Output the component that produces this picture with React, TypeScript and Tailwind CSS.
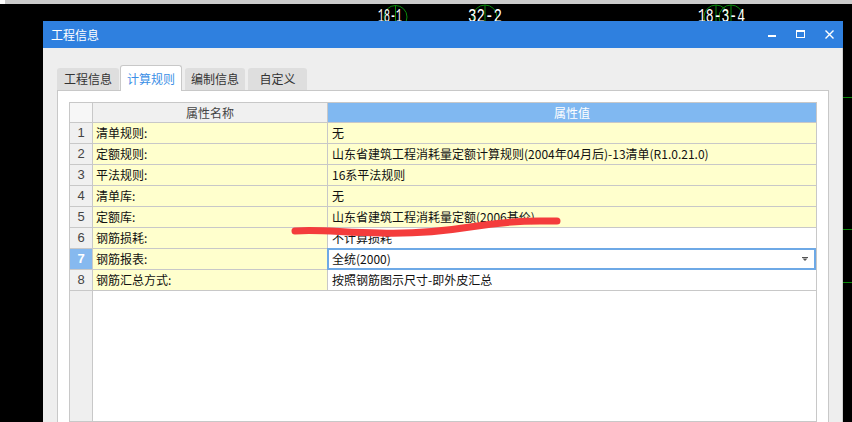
import React from "react";

const rows = [
  { no: 1, name: "清单规则:", value: "无", yellow: true },
  { no: 2, name: "定额规则:", value: "山东省建筑工程消耗量定额计算规则(2004年04月后)-13清单(R1.0.21.0)", yellow: true },
  { no: 3, name: "平法规则:", value: "16系平法规则", yellow: true },
  { no: 4, name: "清单库:", value: "无", yellow: true },
  { no: 5, name: "定额库:", value: "山东省建筑工程消耗量定额(2006基价)", yellow: true },
  { no: 6, name: "钢筋损耗:", value: "不计算损耗", yellow: false },
  { no: 7, name: "钢筋报表:", value: "全统(2000)", yellow: false, selected: true },
  { no: 8, name: "钢筋汇总方式:", value: "按照钢筋图示尺寸-即外皮汇总", yellow: false },
];

const tabs = [
  { label: "工程信息", cls: "w-[62px] h-[22px]" },
  { label: "计算规则", cls: "ml-px w-[62px] h-[26px]", active: true },
  { label: "编制信息", cls: "ml-[3px] w-[60px] h-[22px]" },
  { label: "自定义", cls: "ml-[3px] w-[59px] h-[22px]" },
];

function CanvasBackdrop() {
  // CAD drawing behind the dialog: axis labels and grid lines
  return (
    <svg className="absolute left-0 top-0" width={852} height={422}>
      <g stroke="#0a8a0a" strokeWidth={1} fill="none">
        <circle cx={395.5} cy={17} r={11.5} />
        <line x1={395.5} y1={5} x2={395.5} y2={22} />
        <circle cx={485} cy={17} r={12} />
        <line x1={485} y1={5} x2={485} y2={22} />
        <circle cx={716} cy={17} r={12} />
        <circle cx={731} cy={17} r={12} />
        <line x1={716} y1={5} x2={716} y2={22} />
        <line x1={731} y1={5} x2={731} y2={22} />
        <line x1={843} y1={97.5} x2={852} y2={97.5} />
        <line x1={843} y1={229.5} x2={852} y2={229.5} />
        <line x1={843} y1={282.5} x2={852} y2={282.5} />
      </g>
      <g fill="#ffffff" fontFamily="'Liberation Mono', monospace" fontSize={20}>
        <text x={378} y={22} textLength={24} lengthAdjust="spacingAndGlyphs">18-1</text>
        <text x={468} y={22} textLength={34} lengthAdjust="spacingAndGlyphs">32-2</text>
        <text x={698} y={22} textLength={47} lengthAdjust="spacingAndGlyphs">18-3-4</text>
      </g>
    </svg>
  );
}

function WindowButtons() {
  return (
    <div className="flex items-center h-full">
      <svg width={9} height={9} className="mr-[19px]" viewBox="0 0 9 9">
        <rect x={0} y={5} width={8} height={2} fill="#fff" />
      </svg>
      <svg width={9} height={9} className="mr-[20px]" viewBox="0 0 9 9">
        <rect x={0.5} y={0.5} width={8} height={7} fill="none" stroke="#fff" />
        <rect x={0} y={0} width={9} height={2} fill="#fff" />
      </svg>
      <svg width={9} height={9} className="mr-[9px]" viewBox="0 0 9 9">
        <path d="M0.5 0.5 L8.5 8.5 M8.5 0.5 L0.5 8.5" stroke="#fff" strokeWidth={1.4} />
      </svg>
    </div>
  );
}

function PropertyGrid() {
  return (
    <div className="flex-1 w-[748px] border border-[#c8c8c8] flex flex-col bg-white">
      <div className="flex h-[20px] border-b border-[#c8c8c8]">
        <div className="w-[23px] bg-[#f7f7f7] border-r border-[#c8c8c8]" />
        <div className="w-[235px] bg-[#f0f0f0] border-r border-[#c8c8c8] flex items-center justify-center text-[#444]">
          属性名称
        </div>
        <div className="flex-1 bg-[#80b8f1] flex items-center justify-center text-white">属性值</div>
      </div>
      {rows.map((r) => (
        <div key={r.no} className="flex h-[21px] border-b border-[#c8c8c8]">
          <div
            className={
              r.selected
                ? "w-[23px] border-r border-[#c8c8c8] bg-[#86b9ef] text-white font-bold flex items-center justify-center font-['Liberation_Sans',sans-serif] text-[13px]"
                : "w-[23px] border-r border-[#c8c8c8] bg-[#f0f0f0] text-[#444] flex items-center justify-center font-['Liberation_Sans',sans-serif] text-[13px]"
            }
          >
            {r.no}
          </div>
          <div className="w-[235px] border-r border-[#c8c8c8] bg-[#ffffcd] flex items-center pl-[3px] text-[#111]">
            {r.name}
          </div>
          <div
            className={
              r.yellow
                ? "flex-1 bg-[#ffffcd] flex items-center pl-[4px] text-[#111]"
                : "relative flex-1 bg-white flex items-center pl-[4px] text-[#111]"
            }
          >
            {r.value}
            {r.selected && (
              <div className="absolute -top-px -left-px right-0 -bottom-px border-2 border-[#6ea9e6] flex items-center justify-end pr-[6px]">
                <svg width={6} height={4} viewBox="0 0 6 4">
                  <rect x={0} y={0} width={6} height={1} fill="#555" />
                  <path d="M0.5 1.5 L5.5 1.5 L3 4 Z" fill="#555" />
                </svg>
              </div>
            )}
          </div>
        </div>
      ))}
      <div className="flex-1 flex">
        <div className="w-[23px] bg-[#efefef] border-r border-[#c8c8c8]" />
        <div className="flex-1 bg-white" />
      </div>
    </div>
  );
}

export default function App() {
  return (
    <div className="relative w-[852px] h-[422px] overflow-hidden bg-black text-[12px] font-['Microsoft_YaHei','Noto_Sans_CJK_SC',sans-serif]">
      <div className="h-[4px] bg-[#cbcbcb] flex">
        <div className="w-[5px] bg-white" />
      </div>
      <CanvasBackdrop />

      <div className="absolute left-[43px] top-[21px] w-[800px] h-[401px] flex flex-col">
        <div className="h-[27px] bg-[#2f80df] flex items-center justify-between pl-[8px]">
          <span className="text-white text-[12px]">工程信息</span>
          <WindowButtons />
        </div>

        <div className="flex-1 flex flex-col bg-[#eeeeee] border-r border-[#cfcfcf] pl-[14px] pt-[17px]">
          <div className="flex items-end h-[26px] -mb-px relative z-10">
            {tabs.map((t) =>
              t.active ? (
                <div
                  key={t.label}
                  className={`${t.cls} bg-white border border-b-0 border-[#c8c8c8] rounded-t-[3px] flex items-center justify-center text-[#3b8fe6]`}
                >
                  {t.label}
                </div>
              ) : (
                <div
                  key={t.label}
                  className={`${t.cls} mb-px bg-[#dedede] rounded-t-[3px] flex items-center justify-center text-[#333]`}
                >
                  {t.label}
                </div>
              )
            )}
          </div>
          <div className="flex-1 w-[772px] bg-white border border-b-0 border-[#c8c8c8] pl-[11px] pt-[11px] flex flex-col">
            <PropertyGrid />
          </div>
        </div>
      </div>

      {/* red marker stroke drawn over the screenshot */}
      <svg className="absolute left-0 top-0 pointer-events-none" width={852} height={422}>
        <path
          d="M295 231 C 320 229, 345 233, 380 233 C 415 234, 445 231, 470 227 C 495 223, 515 221, 540 221 L 557 221"
          fill="none"
          stroke="#f43c3c"
          strokeWidth={7}
          strokeLinecap="round"
        />
      </svg>
    </div>
  );
}
